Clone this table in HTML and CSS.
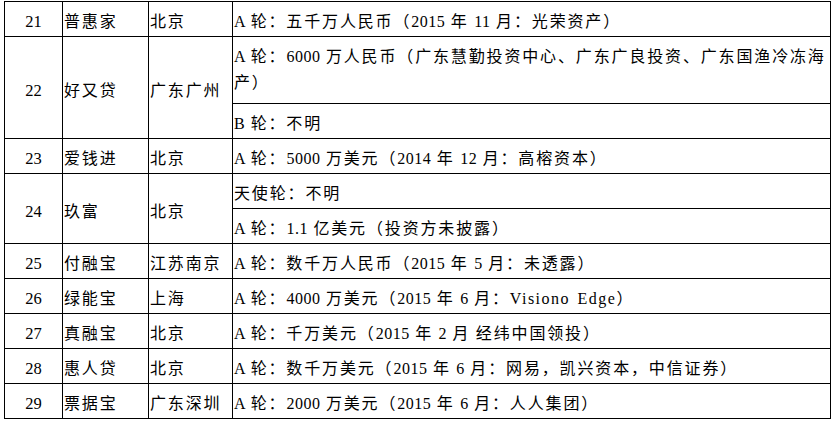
FILE: index.html
```html
<!DOCTYPE html>
<html lang="zh-CN">
<head>
<meta charset="utf-8">
<title>融资表</title>
<link rel="stylesheet" href="styles.css">
</head>
<body>
<table class="fund">
  <colgroup>
    <col class="c-no">
    <col class="c-name">
    <col class="c-city">
    <col class="c-round">
  </colgroup>
  <tbody>
    <tr>
      <td class="num">21</td><td>普惠家</td><td>北京</td>
      <td><span class="en">A </span>轮：五千万人民币（<span class="en">2015 </span>年<span class="en"> 11 </span>月：光荣资产）</td>
    </tr>
    <tr>
      <td class="num" rowspan="2">22</td><td rowspan="2">好又贷</td><td rowspan="2">广东广州</td>
      <td class="tall"><span class="en">A </span>轮：<span class="en">6000 </span>万人民币（广东慧勤投资中心、广东广良投资、广东国渔冷冻海<br>产）</td>
    </tr>
    <tr>
      <td><span class="en">B </span>轮：不明</td>
    </tr>
    <tr>
      <td class="num">23</td><td>爱钱进</td><td>北京</td>
      <td><span class="en">A </span>轮：<span class="en">5000 </span>万美元（<span class="en">2014 </span>年<span class="en"> 12 </span>月：高榕资本）</td>
    </tr>
    <tr>
      <td class="num" rowspan="2">24</td><td rowspan="2">玖富</td><td rowspan="2">北京</td>
      <td>天使轮：不明</td>
    </tr>
    <tr>
      <td><span class="en">A </span>轮：<span class="en">1.1 </span>亿美元（投资方未披露）</td>
    </tr>
    <tr>
      <td class="num">25</td><td>付融宝</td><td>江苏南京</td>
      <td><span class="en">A </span>轮：数千万人民币（<span class="en">2015 </span>年<span class="en"> 5 </span>月：未透露）</td>
    </tr>
    <tr>
      <td class="num">26</td><td>绿能宝</td><td>上海</td>
      <td><span class="en">A </span>轮：<span class="en">4000 </span>万美元（<span class="en">2015 </span>年<span class="en"> 6 </span>月：<span class="en mono">Visiono Edge</span>）</td>
    </tr>
    <tr>
      <td class="num">27</td><td>真融宝</td><td>北京</td>
      <td><span class="en">A </span>轮：千万美元（<span class="en">2015 </span>年<span class="en"> 2 </span>月<span class="en"> </span>经纬中国领投）</td>
    </tr>
    <tr>
      <td class="num">28</td><td>惠人贷</td><td>北京</td>
      <td><span class="en">A </span>轮：数千万美元（<span class="en">2015 </span>年<span class="en"> 6 </span>月：网易，凯兴资本，中信证券）</td>
    </tr>
    <tr>
      <td class="num">29</td><td>票据宝</td><td>广东深圳</td>
      <td><span class="en">A </span>轮：<span class="en">2000 </span>万美元（<span class="en">2015 </span>年<span class="en"> 6 </span>月：人人集团）</td>
    </tr>
  </tbody>
</table>
</body>
</html>
```

FILE: styles.css
```css
html, body {
  margin: 0;
  padding: 0;
  background: #ffffff;
}

body {
  padding: 1px 0 0 4px;
}

.fund {
  border-collapse: collapse;
  table-layout: fixed;
  width: 826px;
  font-family: "Liberation Serif", "Noto Sans CJK SC", serif;
  font-size: 16px;
  color: #000000;
}

.c-no { width: 58px; }
.c-name { width: 86px; }
.c-city { width: 84px; }
.c-round { width: 598px; }

.fund td {
  border: 1px solid #000000;
  padding: 7px 0 1px 1px;
  line-height: 26px;
  letter-spacing: 1.85px;
  vertical-align: middle;
  text-align: left;
}

.fund td.num {
  text-align: center;
  letter-spacing: 0;
  padding-left: 0;
  font-size: 16.5px;
}

.fund td.tall {
  padding-bottom: 7px;
  white-space: nowrap;
}

.en {
  letter-spacing: 0.5px;
  word-spacing: 1px;
}

.mono {
  letter-spacing: 1.5px;
  word-spacing: 2px;
}
```
